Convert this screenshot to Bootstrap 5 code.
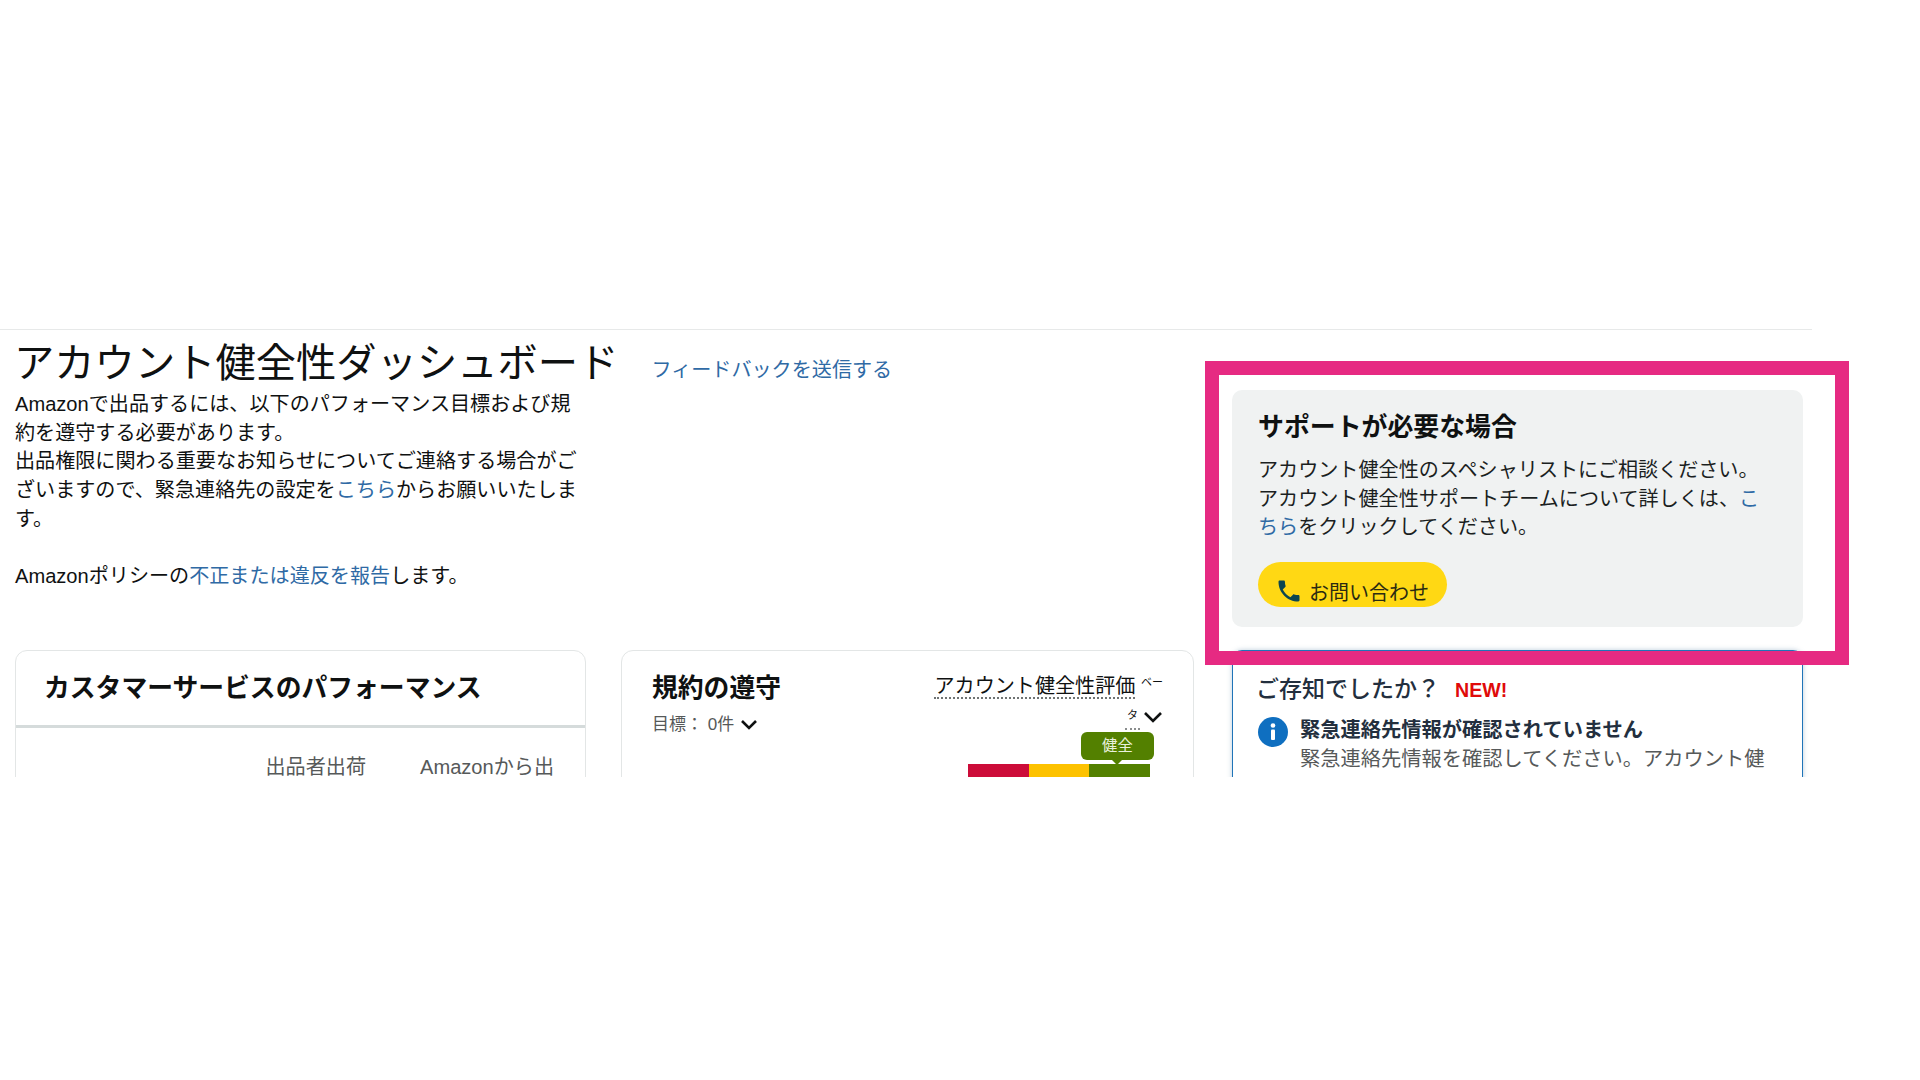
<!DOCTYPE html>
<html lang="ja">
<head>
<meta charset="utf-8">
<title>アカウント健全性ダッシュボード</title>
<link href="https://cdn.jsdelivr.net/npm/bootstrap@5.3.0/dist/css/bootstrap.min.css" rel="stylesheet">
<style>
body{background:#fff;color:#0f1111;font-family:"Liberation Sans","Noto Sans CJK JP",sans-serif;font-size:20.1px;line-height:28.7px;overflow:hidden;height:1080px}
a{color:#2f6aa5;text-decoration:none}
.stage{margin-top:329px;width:1812px;height:448px;overflow:hidden;border-top:1px solid #e7e9e9;padding:0 9px 0 15px;gap:38px}
.main-col{width:1179px;padding-top:9px}
.side-col{width:571px;padding-top:60px}
.page-title{font-size:40.3px;line-height:50px;font-weight:400;margin:0 0 1px -1px}
.feedback{margin-left:33px;position:relative;top:6px}
.intro{width:571px;margin:0}
.cards-row{gap:35px;margin-top:59px}
.panel{width:571px;height:300px;border:1px solid #e3e6e6;border-radius:12px;background:#fff}
.panel-wide{width:573px}
.panel-head{height:77px;padding:1px 28px 0;border-bottom:3px solid #d5dbdb;font-size:25.8px;font-weight:700;line-height:72px}
.col-labels{color:#565959;padding:25px 31px 0 0;gap:54px;justify-content:flex-end}
.comp-body{padding:20px 30px 0}
.comp-title{font-size:25.8px;line-height:34px;font-weight:700}
.goal{color:#565959;font-size:17px;line-height:28px;margin-top:6px}
.rating{width:232px;text-align:right;padding-top:1px}
.rating-link{border-bottom:2px dotted #6f7373;line-height:27px}
.beta{font-size:11px;vertical-align:7px;line-height:10px}
.beta-wrap{line-height:20px;margin-top:4px}
.beta-ta{font-size:11px;border-bottom:2px dotted #8a8d8d;display:inline-block;width:15px;height:25px;line-height:20px;text-align:center;margin-right:3px}
.chev{width:20px;height:12px;fill:none;stroke:#0f1111;stroke-width:2.6}
.chev-sm{width:18px;height:11px;margin-left:6px}
.pill-status{width:73px;height:28px;background:#538000;color:#e9f1dc;font-size:15.4px;line-height:28px;border-radius:6px;text-align:center;position:relative;margin:2px 9px 0 auto}
.pill-status::after{content:"";position:absolute;left:30px;bottom:-5px;border:6px solid transparent;border-top-color:#538000;border-bottom:0}
.meter{width:182px;height:20px;margin:4px 13px 0 auto}
.meter>div{flex:1}
.seg-r{background:#cc0c39}.seg-y{background:#fdc200}.seg-g{background:#538000}
.help-box{background:#f0f2f2;border-radius:10px;height:237px;padding:20px 40px 20px 26px}
.help-title{font-size:25.9px;line-height:34px;font-weight:700;margin-bottom:12px}
.help-text{margin:0 0 20px;line-height:28.7px;color:#1b1f1f}
.call-btn{width:189px;height:45px;background:#ffd814;border:0;border-radius:23px;padding:16px 0 0 17px;color:#2a2a12;font-size:20px;gap:6px}
.call-btn:hover{background:#ffd814}
.phone{width:28px;height:28px;fill:#0b4650;margin-top:-3px}
.know-box{margin-top:23px;height:300px;background:#fff;border:1px solid #1f74b8;border-radius:10px 10px 0 0;box-shadow:0 0 5px rgba(60,110,150,.35);padding:22px 25px}
.know-title{font-size:23px;line-height:32px;font-weight:500;color:#232f3e;margin-left:-2px}
.new-tag{color:#e00a0a;font-size:19.6px;font-weight:700;margin-left:15px}
.know-row{gap:12px;margin-top:11px;font-size:20.25px}
.info{width:30px;height:30px;flex:none}
.know-head{font-weight:700;color:#232f3e;margin-top:-1px}
.know-text{color:#565959;line-height:32px;margin-top:-2px}
.mark-frame{position:absolute;left:1205px;top:361px;width:644px;height:304px;border:14px solid #e62a82}
</style>
</head>
<body>
<div class="stage d-flex">
  <div class="main-col flex-shrink-0">
    <div class="d-flex align-items-center">
      <h1 class="page-title">アカウント健全性ダッシュボード</h1>
      <a href="#" class="feedback">フィードバックを送信する</a>
    </div>
    <p class="intro">Amazonで出品するには、以下のパフォーマンス目標および規約を遵守する必要があります。<br>出品権限に関わる重要なお知らせについてご連絡する場合がございますので、緊急連絡先の設定を<a href="#">こちら</a>からお願いいたします。<br><br>Amazonポリシーの<a href="#">不正または違反を報告</a>します。</p>
    <div class="cards-row d-flex">
      <div class="panel flex-shrink-0">
        <div class="panel-head">カスタマーサービスのパフォーマンス</div>
        <div class="col-labels d-flex"><span>出品者出荷</span><span>Amazonから出</span></div>
      </div>
      <div class="panel panel-wide flex-shrink-0">
        <div class="comp-body d-flex justify-content-between">
          <div>
            <div class="comp-title">規約の遵守</div>
            <div class="goal d-flex align-items-center">目標： 0件<svg class="chev chev-sm" viewBox="0 0 18 11"><path d="M2 2l7 7 7-7"/></svg></div>
          </div>
          <div class="rating">
            <span class="rating-link">アカウント健全性評価</span> <span class="beta">ベー</span>
            <div class="beta-wrap d-flex justify-content-end align-items-center"><span class="beta-ta">タ</span><svg class="chev" viewBox="0 0 20 12"><path d="M2 2l8 8 8-8"/></svg></div>
            <div class="pill-status">健全</div>
            <div class="meter d-flex"><div class="seg-r"></div><div class="seg-y"></div><div class="seg-g"></div></div>
          </div>
        </div>
      </div>
    </div>
  </div>
  <div class="side-col flex-shrink-0">
    <div class="help-box">
      <div class="help-title">サポートが必要な場合</div>
      <p class="help-text">アカウント健全性のスペシャリストにご相談ください。<br>アカウント健全性サポートチームについて詳しくは、<a href="#">こちら</a>をクリックしてください。</p>
      <button class="btn call-btn d-flex align-items-center"><svg class="phone" viewBox="0 0 24 24"><path d="M6.62 10.79c1.44 2.83 3.76 5.14 6.59 6.59l2.2-2.2c.27-.27.67-.36 1.02-.24 1.12.37 2.33.57 3.57.57.55 0 1 .45 1 1V20c0 .55-.45 1-1 1-9.39 0-17-7.61-17-17 0-.55.45-1 1-1h3.5c.55 0 1 .45 1 1 0 1.25.2 2.45.57 3.57.11.35.03.74-.25 1.02l-2.2 2.2z"/></svg>お問い合わせ</button>
    </div>
    <div class="know-box">
      <div class="know-title">ご存知でしたか？<span class="new-tag">NEW!</span></div>
      <div class="know-row d-flex">
        <svg class="info" viewBox="0 0 30 30"><circle cx="15" cy="15" r="15" fill="#0f6fc0"/><rect x="13" y="12.5" width="4" height="10.5" rx="1" fill="#fff"/><circle cx="15" cy="8.5" r="2.3" fill="#fff"/></svg>
        <div>
          <div class="know-head">緊急連絡先情報が確認されていません</div>
          <div class="know-text">緊急連絡先情報を確認してください。アカウント健全性に関わる重要なお知らせをお送りします。</div>
        </div>
      </div>
    </div>
  </div>
</div>
<div class="mark-frame"></div>
</body>
</html>
